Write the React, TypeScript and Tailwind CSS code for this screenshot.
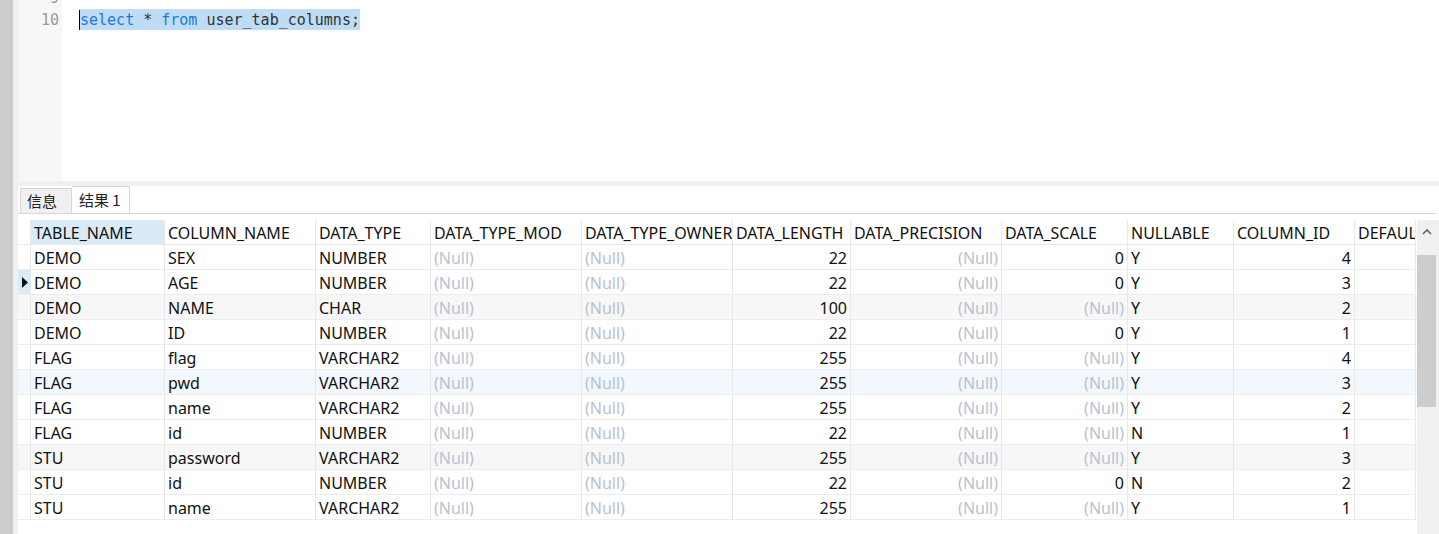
import React from 'react'

type Row = {
  t: string
  c: string
  d: string
  len: string
  scale: string | null
  n: string
  id: string
}

const cols = [
  { name: 'TABLE_NAME', w: 'w-[134px]' },
  { name: 'COLUMN_NAME', w: 'w-[151px]' },
  { name: 'DATA_TYPE', w: 'w-[115px]' },
  { name: 'DATA_TYPE_MOD', w: 'w-[151px]' },
  { name: 'DATA_TYPE_OWNER', w: 'w-[151px]' },
  { name: 'DATA_LENGTH', w: 'w-[118px]' },
  { name: 'DATA_PRECISION', w: 'w-[151px]' },
  { name: 'DATA_SCALE', w: 'w-[126px]' },
  { name: 'NULLABLE', w: 'w-[106px]' },
  { name: 'COLUMN_ID', w: 'w-[121px]' },
  { name: 'DEFAUL', w: 'w-[61px]' },
]

const rows: Row[] = [
  { t: 'DEMO', c: 'SEX', d: 'NUMBER', len: '22', scale: '0', n: 'Y', id: '4' },
  { t: 'DEMO', c: 'AGE', d: 'NUMBER', len: '22', scale: '0', n: 'Y', id: '3' },
  { t: 'DEMO', c: 'NAME', d: 'CHAR', len: '100', scale: null, n: 'Y', id: '2' },
  { t: 'DEMO', c: 'ID', d: 'NUMBER', len: '22', scale: '0', n: 'Y', id: '1' },
  { t: 'FLAG', c: 'flag', d: 'VARCHAR2', len: '255', scale: null, n: 'Y', id: '4' },
  { t: 'FLAG', c: 'pwd', d: 'VARCHAR2', len: '255', scale: null, n: 'Y', id: '3' },
  { t: 'FLAG', c: 'name', d: 'VARCHAR2', len: '255', scale: null, n: 'Y', id: '2' },
  { t: 'FLAG', c: 'id', d: 'NUMBER', len: '22', scale: null, n: 'N', id: '1' },
  { t: 'STU', c: 'password', d: 'VARCHAR2', len: '255', scale: null, n: 'Y', id: '3' },
  { t: 'STU', c: 'id', d: 'NUMBER', len: '22', scale: '0', n: 'N', id: '2' },
  { t: 'STU', c: 'name', d: 'VARCHAR2', len: '255', scale: null, n: 'Y', id: '1' },
]

const base = 'h-full shrink-0 border-r border-[#e8e8e8] overflow-hidden whitespace-nowrap flex items-center'
const cell = `${base} px-[3px] pt-[2px]`
const marker = `${base} w-[13px]`

function Null() {
  return <span className="text-[#b7c2d3]">(Null)</span>
}

export default function App() {
  return (
    <div className="flex h-[534px] w-[1439px] overflow-hidden bg-white text-[16px] text-[#111]" style={{ fontFamily: '"Noto Sans", "Noto Sans CJK SC", sans-serif' }}>
      <div className="w-[13px] shrink-0 bg-[#cccccc]" />
      <div className="w-[5px] shrink-0 bg-[#f0f0f0]" />
      <div className="flex min-w-0 flex-1 flex-col">
        {/* editor */}
        <div className="flex h-[181px] shrink-0" style={{ fontFamily: '"DejaVu Sans Mono", monospace' }}>
          <div className="w-[44px] shrink-0 bg-[#f7f7f7] pr-[3px] text-right text-[15px] leading-[22px] text-[#9a9a9a]">
            <div className="-mt-[13px]">9</div>
            <div>10</div>
          </div>
          <div className="flex-1 pl-[17px] text-[15px] leading-[22px]">
            <div className="-mt-[13px] h-[22px]" />
            <div className="flex h-[22px]">
              <span className="relative h-[21px] bg-[#bedcf6] pl-px text-[#333]">
                <span className="absolute left-0 top-[1px] h-[20px] w-px bg-black" />
                <span className="text-[#1d7ad8]">select</span> * <span className="text-[#1d7ad8]">from</span> user_tab_columns;
              </span>
            </div>
          </div>
        </div>
        <div className="h-[5px] shrink-0 bg-[#f0f0f0]" />
        {/* tabs */}
        <div className="mr-[3px] flex h-[28px] shrink-0 items-end border-b border-[#d6d6d6] pl-[2px]" style={{ fontFamily: '"Noto Sans CJK SC", sans-serif' }}>
          <div className="flex h-[25px] w-[52px] items-center border border-b-0 border-[#d6d6d6] bg-[#f0f0f0] pl-[6px] text-[15px] text-[#222]">信息</div>
          <div className="flex h-[27px] w-[58px] items-center border border-b-0 border-l-0 border-[#d6d6d6] bg-white pl-[7px] text-[15px] text-[#222]">结果 1</div>
        </div>
        <div className="h-[6px] shrink-0" />
        {/* grid */}
        <div className="flex min-h-0 flex-1">
          <div className="min-w-0 flex-1 overflow-hidden">
            <div className="flex h-[25px] border-b border-[#e8e8e8]">
              <div className={marker} />
              {cols.map((c, i) => (
                <div key={c.name} className={`${cell} ${c.w} ${i === 0 ? 'bg-[#d9eaf8]' : ''}`}>{c.name}</div>
              ))}
            </div>
            {rows.map((r, i) => (
              <div
                key={i}
                className={`flex h-[25px] border-b border-[#ececec] ${i === 2 || i === 8 ? 'bg-[#f7f7f7]' : i === 5 ? 'bg-[#f2f8fd]' : ''}`}
              >
                <div className={`${marker} ${i === 1 ? 'bg-[#d9eaf8]' : ''}`}>
                  {i === 1 && (
                    <svg width="7" height="11" viewBox="0 0 7 11" className="ml-[4px] shrink-0">
                      <path d="M0 0 L6 5.5 L0 11 Z" fill="#111" />
                    </svg>
                  )}
                </div>
                <div className={`${cell} w-[134px]`}>{r.t}</div>
                <div className={`${cell} w-[151px]`}>{r.c}</div>
                <div className={`${cell} w-[115px]`}>{r.d}</div>
                <div className={`${cell} w-[151px]`}><Null /></div>
                <div className={`${cell} w-[151px]`}><Null /></div>
                <div className={`${cell} w-[118px] justify-end`}>{r.len}</div>
                <div className={`${cell} w-[151px] justify-end`}><Null /></div>
                <div className={`${cell} w-[126px] justify-end`}>{r.scale ?? <Null />}</div>
                <div className={`${cell} w-[106px]`}>{r.n}</div>
                <div className={`${cell} w-[121px] justify-end`}>{r.id}</div>
                <div className={`${cell} w-[61px]`} />
              </div>
            ))}
          </div>
          {/* scrollbar */}
          <div className="flex w-[22px] shrink-0 flex-col bg-[#f0f0f0]">
            <div className="flex h-[24px] items-center justify-center pr-[3px]">
              <svg width="10" height="6" viewBox="0 0 10 6">
                <path d="M1 5 L5 1 L9 5" fill="none" stroke="#606060" strokeWidth="1.6" />
              </svg>
            </div>
            <div className="mt-[11px] h-[152px] w-[19px] bg-[#cdcdcd]" />
          </div>
        </div>
      </div>
    </div>
  )
}
